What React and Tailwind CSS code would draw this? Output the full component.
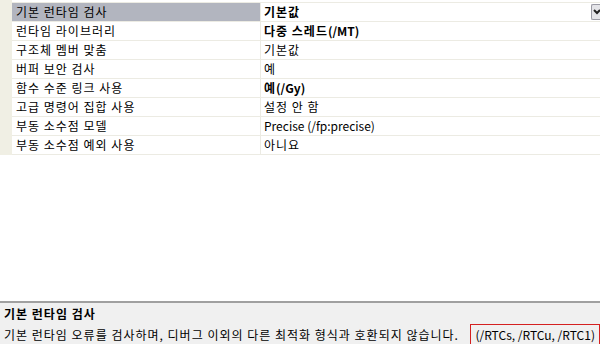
import React from "react";

const rows = [
  { name: "기본 런타임 검사", value: "기본값", bold: true, selected: true },
  { name: "런타임 라이브러리", value: "다중 스레드(/MT)", bold: true },
  { name: "구조체 멤버 맞춤", value: "기본값" },
  { name: "버퍼 보안 검사", value: "예" },
  { name: "함수 수준 링크 사용", value: "예(/Gy)", bold: true },
  { name: "고급 명령어 집합 사용", value: "설정 안 함" },
  { name: "부동 소수점 모델", value: "Precise (/fp:precise)" },
  { name: "부동 소수점 예외 사용", value: "아니요" },
];

// Hangul runs get a little extra tracking so they match the wider system font
function Ko({ text }) {
  const parts = text.split(/([\uac00-\ud7a3][\uac00-\ud7a3 ,.]*)/).filter(Boolean);
  return parts.map((p, i) =>
    /[\uac00-\ud7a3]/.test(p) ? (
      <span key={i} className="tracking-[1px]">
        {p}
      </span>
    ) : (
      <span key={i}>{p}</span>
    )
  );
}

export default function App() {
  return (
    <div
      className="w-[600px] h-[344px] bg-white flex flex-col overflow-hidden text-[12px] text-black"
      style={{ fontFamily: '"Noto Sans CJK KR", "Noto Sans", sans-serif' }}
    >
      <div className="flex-1 flex flex-col">
        <div className="flex h-[3px]">
          <div className="w-[12px] bg-[#f0efe4]" />
          <div className="flex-1 border-b border-[#ecebe3]" />
        </div>
        {rows.map((r) => (
          <div key={r.name} className="flex h-[19px]">
            <div className="w-[12px] bg-[#f0efe4]" />
            <div
              className={`w-[249px] pl-[4px] flex items-center border-b border-r border-[#ecebe3] leading-none whitespace-pre ${
                r.selected ? "bg-[#b2b5bf]" : ""
              }`}
            >
              <Ko text={r.name} />
            </div>
            <div
              className={`flex-1 pl-[3px] flex items-center border-b border-[#ecebe3] leading-none whitespace-pre ${
                r.bold ? "font-bold" : ""
              }`}
            >
              <span className="flex-1">
                <Ko text={r.value} />
              </span>
              {r.selected && (
                <span className="w-[9px] h-[16px] bg-[#e4e4e8] border border-[#9a9aa4] border-r-0 rounded-l-[2px] flex items-center justify-end">
                  <svg width="7" height="6" viewBox="0 0 7 6">
                    <path d="M1 1 L4 4 L7 1" stroke="#222" strokeWidth="2" fill="none" />
                  </svg>
                </span>
              )}
            </div>
          </div>
        ))}
      </div>

      <div className="h-[43px] bg-[#f0f0f0] border-t-2 border-[#a0a0a0] flex flex-col pl-[4px] pt-[3px]">
        <div className="font-bold leading-[16px] whitespace-pre">
          <Ko text="기본 런타임 검사" />
        </div>
        <div className="flex items-center leading-[16px] mt-[2px] whitespace-pre">
          <span>
            <Ko text="기본 런타임 오류를 검사하며, 디버그 이외의 다른 최적화 형식과 호환되지 않습니다." />
          </span>
          <span className="ml-auto px-[4px] h-[22px] flex items-center border border-[#d42020]">
            (/RTCs, /RTCu, /RTC1)
          </span>
        </div>
      </div>
    </div>
  );
}
